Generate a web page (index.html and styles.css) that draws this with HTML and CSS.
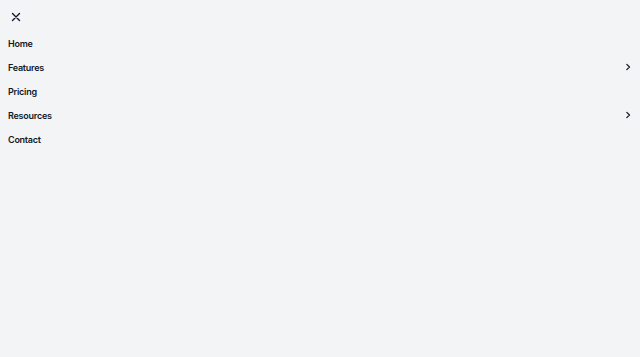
FILE: index.html
```html
<!DOCTYPE html>
<html lang="en">
<head>
    <meta charset="UTF-8">
    <meta name="viewport" content="width=device-width, initial-scale=1.0">
    <title>Menu</title>
    <link rel="stylesheet" href="styles.css">
</head>
<body>
    <div class="menu">
        <button class="close" aria-label="Close menu">
            <svg width="10" height="10" viewBox="0 0 10 10"><path d="M1.5 1.5l7 7M8.5 1.5l-7 7" stroke="#111827" stroke-width="1.4" stroke-linecap="round"/></svg>
        </button>
        <ul class="nav">
            <li class="item"><a href="#">Home</a></li>
            <li class="item"><a href="#">Features</a>
                <svg class="chev" width="8" height="8" viewBox="0 0 8 8"><path d="M2.8 1.3l2.7 2.7-2.7 2.7" fill="none" stroke="#111827" stroke-width="1.2" stroke-linecap="round" stroke-linejoin="round"/></svg>
            </li>
            <li class="item"><a href="#">Pricing</a></li>
            <li class="item"><a href="#">Resources</a>
                <svg class="chev" width="8" height="8" viewBox="0 0 8 8"><path d="M2.8 1.3l2.7 2.7-2.7 2.7" fill="none" stroke="#111827" stroke-width="1.2" stroke-linecap="round" stroke-linejoin="round"/></svg>
            </li>
            <li class="item"><a href="#">Contact</a></li>
        </ul>
    </div>
</body>
</html>
```

FILE: styles.css
```css
body {
    margin: 0;
    background: #f3f4f6;
    font-family: 'Inter', 'Liberation Sans', sans-serif;
    color: #111827;
}
.menu {
    padding: 9px 8px 8px 8px;
}
.close {
    display: flex;
    align-items: center;
    justify-content: center;
    width: 16px;
    height: 16px;
    padding: 0;
    border: none;
    background: transparent;
    cursor: pointer;
}
.nav {
    list-style: none;
    margin: 6px 0 0;
    padding: 0;
}
.item {
    display: flex;
    align-items: center;
    justify-content: space-between;
    height: 24px;
}
.item a {
    font-size: 9px;
    font-weight: 600;
    letter-spacing: -0.25px;
    color: #111827;
    text-decoration: none;
}
```
